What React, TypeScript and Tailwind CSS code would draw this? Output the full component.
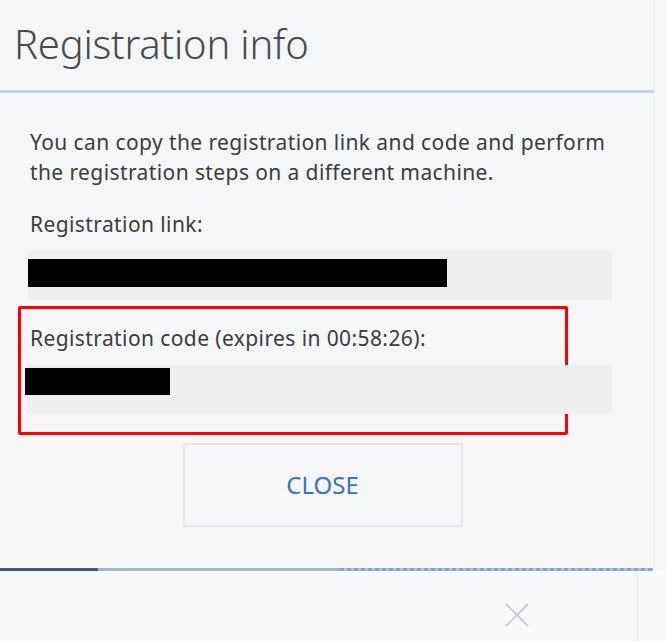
import { X } from "lucide-react";

export default function App() {
  return (
    <div
      className="w-[667px] h-[641px] overflow-hidden bg-[#f4f6f8] flex flex-col"
      style={{ fontFamily: '"Noto Sans", "Open Sans", sans-serif' }}
    >
      {/* Dialog */}
      <div className="flex h-[568px]">
        <div className="w-[655px] flex flex-col border-r border-[#eceef2]">
          {/* Header */}
          <div className="h-[93px] border-b-[3px] border-[#c6d3e6] pl-[14px] pt-[19px]">
            <h1 className="text-[40px] leading-[50px] font-light text-[#4a4a4a] tracking-[-0.2px]">
              Registration info
            </h1>
          </div>

          {/* Body */}
          <div className="flex flex-col pt-[34px]">
            <p className="px-[30px] text-[21px] leading-[30px] text-[#3c3c3c] tracking-[0.4px] whitespace-nowrap">
              You can copy the registration link and code and perform
              <br />
              the registration steps on a different machine.
            </p>

            <p className="px-[30px] mt-[22px] text-[21px] leading-[30px] text-[#3c3c3c] tracking-[0.4px]">
              Registration link:
            </p>
            <div className="ml-[28px] mr-[42px] mt-[11px] h-[50px] bg-[#eeeff0] pt-[9px]">
              <div className="w-[419px] h-[28px] bg-black" />
            </div>

            <div className="ml-[18px] mr-[86px] mt-[6px] h-[129px] border-[3px] border-[#ff0000] rounded-[2px] pt-[14px]">
              <p className="pl-[9px] text-[21px] leading-[30px] text-[#3c3c3c] tracking-[0.4px] whitespace-nowrap">
                Registration code (expires in 00:58:26):
              </p>
              <div className="flex -mr-[47px] mt-[12px] h-[49px]">
                <div className="ml-[2px] w-[4px]" />
                <div className="flex-1 bg-[#eeeff0] relative">
                  <div className="absolute left-[-2px] top-[3px] w-[145px] h-[27px] bg-black" />
                </div>
              </div>
            </div>

            <div className="flex justify-center mt-[8px]">
              <button className="w-[280px] h-[84px] border-2 border-[#e5e7ea] text-[24px] text-[#3d72b8] ml-[-9px]">
                CLOSE
              </button>
            </div>
          </div>
        </div>
      </div>

      {/* Progress line */}
      <div className="flex h-[3px] w-[653px]">
        <div className="w-[98px] bg-[#46597a]" />
        <div className="w-[242px] bg-[#a8b4c7]" />
        <div className="flex-1 bg-[repeating-linear-gradient(90deg,#8aa3cc_0px,#8aa3cc_4px,#b6c2d4_4px,#b6c2d4_7px)]" />
      </div>

      {/* Bottom bar */}
      <div className="flex-1 flex bg-[#f8f9fb]">
        <div className="w-[638px] border-r border-[#e8eaee] flex items-center pl-[496px] pt-[18px]">
          <X className="w-[42px] h-[42px] text-[#c8cacd]" strokeWidth={1.1} />
        </div>
      </div>
    </div>
  );
}
